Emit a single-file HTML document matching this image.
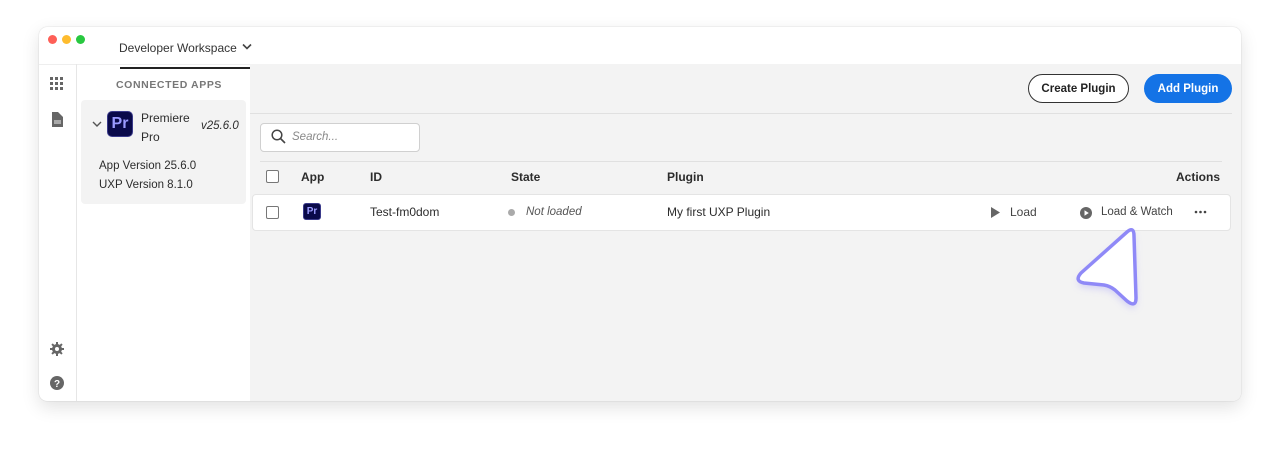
<!DOCTYPE html>
<html><head><meta charset="utf-8"><style>
*{box-sizing:border-box;margin:0;padding:0}
body{width:1280px;height:453px;background:#fff;font-family:"Liberation Sans",sans-serif;position:relative;overflow:hidden;color:#2c2c2c}
.win{position:absolute;left:39px;top:27px;width:1202px;height:374px;border-radius:8px;background:#fff;box-shadow:0 6px 18px rgba(0,0,0,.12),0 0 1px rgba(0,0,0,.25);overflow:hidden}
.abs{position:absolute}
.dot{position:absolute;top:8px;width:9px;height:9px;border-radius:50%}
.main{position:absolute;left:211px;top:37px;right:0;bottom:0;background:#f3f3f3}
.t{position:absolute;white-space:nowrap;line-height:15px}
.cb{position:absolute;width:13px;height:13px;border:1.5px solid #777;border-radius:2px;background:#fff}
.pr{position:absolute;background:#0a0a4a;color:#9b9bff;font-weight:bold;border-radius:3px;text-align:center;border:1px solid #3a3a8a}
</style></head><body>
<div class="win">
  <div class="dot" style="left:9px;background:#fe5f57"></div>
  <div class="dot" style="left:23px;background:#febc2e"></div>
  <div class="dot" style="left:37px;background:#28c840"></div>
  <div class="t" style="left:80px;top:14px;font-size:12px;color:#333">Developer Workspace</div>
  <svg class="abs" style="left:203px;top:16px" width="10" height="8"><path d="M1 1.5L5 5.5L9 1.5" stroke="#444" stroke-width="1.6" fill="none"/></svg>
  <div class="abs" style="left:81px;top:40px;width:131px;height:2px;background:#222"></div>
  <div class="abs" style="left:0;top:37px;width:1202px;height:1px;background:#eee"></div>
  <div class="abs" style="left:37px;top:37px;width:1px;height:337px;background:#e6e6e6"></div>
  <svg class="abs" style="left:11px;top:50px" width="14" height="14"><g fill="#666"><rect x="0" y="0" width="3" height="3"/><rect x="5" y="0" width="3" height="3"/><rect x="10" y="0" width="3" height="3"/><rect x="0" y="5" width="3" height="3"/><rect x="5" y="5" width="3" height="3"/><rect x="10" y="5" width="3" height="3"/><rect x="0" y="10" width="3" height="3"/><rect x="5" y="10" width="3" height="3"/><rect x="10" y="10" width="3" height="3"/></g></svg>
  <svg class="abs" style="left:13px;top:85px" width="11" height="15"><path d="M0 0H6L11 5V15H0Z" fill="#666"/><rect x="2" y="8" width="7" height="4" fill="#aaa"/></svg>
  <svg class="abs" style="left:11px;top:315px" width="14" height="14"><g fill="#666"><circle cx="7" cy="7" r="5"/><rect x="6" y="0" width="2" height="14"/><rect x="0" y="6" width="14" height="2"/><rect x="6" y="0" width="2" height="14" transform="rotate(45 7 7)"/><rect x="6" y="0" width="2" height="14" transform="rotate(-45 7 7)"/></g><circle cx="7" cy="7" r="2" fill="#fff"/></svg>
  <svg class="abs" style="left:11px;top:349px" width="14" height="14"><circle cx="7" cy="7" r="7" fill="#666"/><text x="7" y="11" font-size="10" font-weight="bold" fill="#fff" text-anchor="middle" font-family="Liberation Sans">?</text></svg>
  <div class="t" style="left:77px;top:51px;font-size:10.5px;font-weight:bold;letter-spacing:.6px;color:#777">CONNECTED APPS</div>
  <div class="abs" style="left:42px;top:73px;width:165px;height:104px;background:#f3f3f3;border-radius:4px"></div>
  <svg class="abs" style="left:53px;top:94px" width="10" height="7"><path d="M1 1L5 5L9 1" stroke="#555" stroke-width="1.4" fill="none"/></svg>
  <div class="pr" style="left:68px;top:84px;width:26px;height:26px;font-size:16px;line-height:24px;border-radius:5px">Pr</div>
  <div class="t" style="left:102px;top:82px;font-size:12px;line-height:19px">Premiere<br>Pro</div>
  <div class="t" style="left:162px;top:92px;font-size:11.5px;font-style:italic">v25.6.0</div>
  <div class="t" style="left:60px;top:130px;font-size:11.5px;line-height:19px">App Version 25.6.0<br>UXP Version 8.1.0</div>
  <div class="main">
    <div class="abs" style="left:778px;top:10px;width:101px;height:29px;border:1.5px solid #333;border-radius:15px;background:#fff;font-size:11.5px;font-weight:bold;text-align:center;line-height:28px;color:#222">Create Plugin</div>
    <div class="abs" style="left:894px;top:10px;width:88px;height:29px;border-radius:15px;background:#1473e6;font-size:11.5px;font-weight:bold;text-align:center;line-height:30px;color:#fff">Add Plugin</div>
    <div class="abs" style="left:0;top:49px;width:982px;height:1px;background:#e0e0e0"></div>
    <div class="abs" style="left:10px;top:59px;width:160px;height:29px;border:1px solid #d0d0d0;border-radius:4px;background:#fff"></div>
    <svg class="abs" style="left:21px;top:65px" width="15" height="15"><circle cx="6" cy="6" r="4.8" stroke="#444" stroke-width="1.5" fill="none"/><path d="M9.5 9.5L14 14" stroke="#444" stroke-width="1.6"/></svg>
    <div class="t" style="left:42px;top:66px;font-size:11.5px;font-style:italic;color:#888">Search...</div>
    <div class="abs" style="left:10px;top:97px;width:962px;height:1px;background:#e0e0e0"></div>
    <div class="cb" style="left:16px;top:106px"></div>
    <div class="t" style="left:51px;top:106px;font-size:12px;font-weight:bold">App</div>
    <div class="t" style="left:120px;top:106px;font-size:12px;font-weight:bold">ID</div>
    <div class="t" style="left:261px;top:106px;font-size:12px;font-weight:bold">State</div>
    <div class="t" style="left:417px;top:106px;font-size:12px;font-weight:bold">Plugin</div>
    <div class="t" style="left:926px;top:106px;font-size:12px;font-weight:bold">Actions</div>
    <div class="abs" style="left:2px;top:130px;width:979px;height:37px;background:#fff;border:1px solid #e4e4e4;border-radius:4px"></div>
    <div class="cb" style="left:16px;top:142px"></div>
    <div class="pr" style="left:53px;top:139px;width:18px;height:17px;font-size:10px;line-height:15px">Pr</div>
    <div class="t" style="left:120px;top:141px;font-size:12px">Test-fm0dom</div>
    <div class="abs" style="left:258px;top:145px;width:7px;height:7px;border-radius:50%;background:#aaa"></div>
    <div class="t" style="left:276px;top:141px;font-size:11.5px;font-style:italic;color:#555">Not loaded</div>
    <div class="t" style="left:417px;top:141px;font-size:12px">My first UXP Plugin</div>
    <svg class="abs" style="left:740px;top:143px" width="11" height="11"><path d="M1 0L10 5.5L1 11Z" fill="#666"/></svg>
    <div class="t" style="left:760px;top:141px;font-size:12px;color:#444">Load</div>
    <svg class="abs" style="left:830px;top:143px" width="12" height="12"><circle cx="6" cy="6" r="6" fill="#666"/><path d="M4.5 3.3L8.8 6L4.5 8.7Z" fill="#fff"/></svg>
    <div class="t" style="left:851px;top:141px;font-size:11.5px;color:#444">Load &amp; Watch</div>
    <svg class="abs" style="left:944px;top:146px" width="14" height="4"><g fill="#444"><circle cx="2" cy="2" r="1.3"/><circle cx="6.5" cy="2" r="1.3"/><circle cx="11" cy="2" r="1.3"/></g></svg>
  </div>
</div>
<svg class="abs" style="left:0;top:0" width="1280" height="453">
<defs><filter id="s" x="-50%" y="-50%" width="200%" height="200%"><feGaussianBlur stdDeviation="4"/></filter></defs>
<path d="M1134 236Q1134 226 1127 232L1081 273Q1074 281 1084 283L1104 285Q1110 286 1115 290L1127 301Q1136 308 1136 298Z" fill="#8f89f7" opacity=".35" filter="url(#s)" transform="translate(0,4)"/>
<path d="M1134 236Q1134 226 1127 232L1081 273Q1074 281 1084 283L1104 285Q1110 286 1115 290L1127 301Q1136 308 1136 298Z" fill="#fff" stroke="#8f89f7" stroke-width="3.5" stroke-linejoin="round"/>
</svg>
</body></html>
